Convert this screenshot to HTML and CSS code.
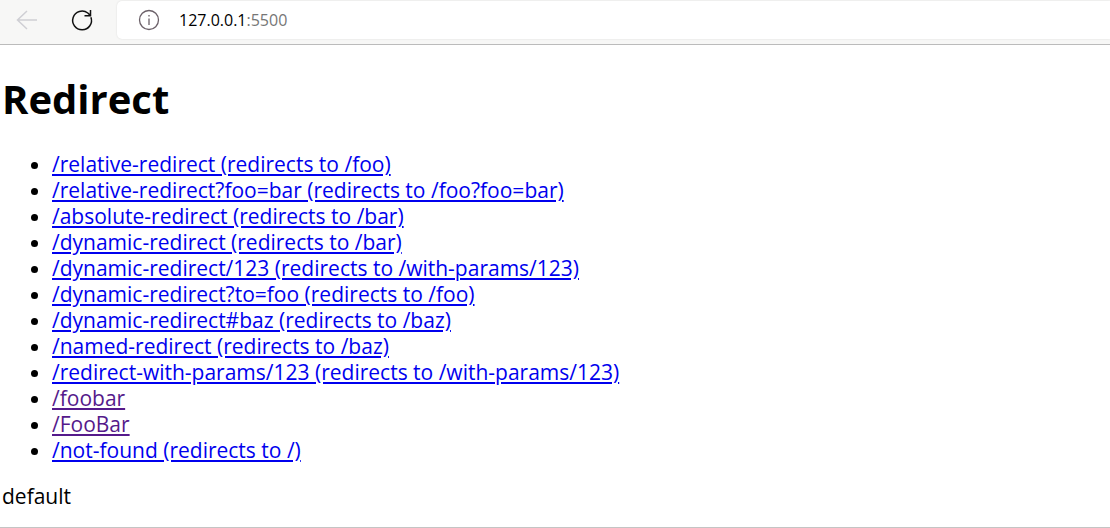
FILE: index.html
```
<!DOCTYPE html>
<html lang="en">
<head>
    <meta charset="UTF-8">
    <meta name="viewport" content="width=device-width, initial-scale=1.0">
    <title>Redirect</title>
    <link rel="stylesheet" href="styles.css">
</head>
<body>
    <header class="toolbar">
        <nav class="nav-buttons">
            <button type="button" class="nav-button" aria-label="Back" disabled>
                <svg width="24" height="24" viewBox="0 0 24 24"><path d="M22 12H2.5M12 3L2.5 12l9.5 9"/></svg>
            </button>
            <button type="button" class="nav-button" aria-label="Refresh">
                <svg width="24" height="24" viewBox="0 0 24 24"><path d="M20.9 9.2A9.4 9.4 0 1 1 17.8 5L20.5 7.6M20.5 2v5.8h-6"/></svg>
            </button>
        </nav>
        <div class="address-bar">
            <svg class="info" width="22" height="22" viewBox="0 0 22 22"><circle cx="11" cy="11" r="9.5"/><path d="M11 9.5V16M11 6v1.6"/></svg>
            <span class="url">127.0.0.1<span class="port">:5500</span></span>
        </div>
    </header>

    <main class="page">
        <h1>Redirect</h1>
        <ul class="links">
            <li><a href="#">/relative-redirect (redirects to /foo)</a></li>
            <li><a href="#">/relative-redirect?foo=bar (redirects to /foo?foo=bar)</a></li>
            <li><a href="#">/absolute-redirect (redirects to /bar)</a></li>
            <li><a href="#">/dynamic-redirect (redirects to /bar)</a></li>
            <li><a href="#">/dynamic-redirect/123 (redirects to /with-params/123)</a></li>
            <li><a href="#">/dynamic-redirect?to=foo (redirects to /foo)</a></li>
            <li><a href="#">/dynamic-redirect#baz (redirects to /baz)</a></li>
            <li><a href="#">/named-redirect (redirects to /baz)</a></li>
            <li><a href="#">/redirect-with-params/123 (redirects to /with-params/123)</a></li>
            <li><a href="#" class="visited">/foobar</a></li>
            <li><a href="#" class="visited">/FooBar</a></li>
            <li><a href="#">/not-found (redirects to /)</a></li>
        </ul>
        <p class="view">default</p>
    </main>
</body>
</html>
```
FILE: styles.css
```
* {
    box-sizing: border-box;
    margin: 0;
    padding: 0;
}

body {
    background-color: #fff;
    color: #000;
    font-family: 'Open Sans', 'Noto Sans', sans-serif;
    font-size: 21px;
    line-height: 26px;
}

.toolbar {
    display: flex;
    height: 45px;
    padding-top: 1px;
    background-color: #f7f7f6;
    border-bottom: 1px solid #bbb;
}

.nav-buttons {
    display: flex;
    gap: 31px;
    height: 38px;
    padding: 0 23px 0 15px;
}

.nav-button {
    width: 24px;
    border: none;
    background: none;
    color: #111;
}

.nav-button:disabled {
    color: #cfcfd4;
}

.toolbar svg {
    display: block;
    fill: none;
    stroke: currentColor;
    stroke-width: 1.5;
}

.address-bar {
    display: flex;
    flex: 1;
    align-items: center;
    height: 38px;
    padding-left: 21px;
    background-color: #fff;
    border-radius: 5px 0 0 5px;
    box-shadow: 0 0 2px rgba(0, 0, 0, 0.12);
}

.address-bar .info {
    margin-right: 19px;
    color: #6b6068;
    stroke-width: 1.3;
}

.url {
    font-size: 16px;
}

.port {
    color: #767676;
}

.page {
    padding: 31px 2px 18px;
    border-bottom: 1px solid #c4c4c4;
}

h1 {
    margin-bottom: 30px;
    font-size: 40px;
    line-height: 45px;
}

.links {
    padding-left: 50px;
    margin-bottom: 20px;
}

.links a {
    color: #00e;
}

.links a.visited {
    color: #551a8b;
}
```
